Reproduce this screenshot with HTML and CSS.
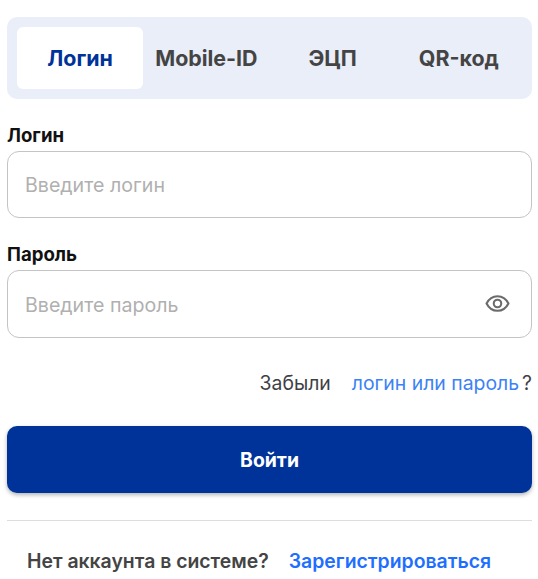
FILE: index.html
```html
<!DOCTYPE html>
<html lang="en">
<head>
  <meta charset="UTF-8" />
  <title>Вход</title>
  <meta name="viewport" content="width=device-width, initial-scale=1" />
  <link rel="stylesheet" href="styles.css">
</head>
<body>

  <div class="container">
    <!-- TABS -->
    <div class="tabs">
      <div class="tab active">Логин</div>
      <div class="tab">Mobile-ID</div>
      <div class="tab">ЭЦП</div>
      <div class="tab">QR-код</div>
    </div>

    <!-- FORM -->
    <div class="field">
      <label class="field-label">Логин</label>
      <div class="input-box">
        <span class="placeholder">Введите логин</span>
      </div>
    </div>

    <div class="field field-password">
      <label class="field-label">Пароль</label>
      <div class="input-box">
        <span class="placeholder">Введите пароль</span>
        <svg class="eye" width="25" height="25" viewBox="0 0 24 24" fill="none" stroke="#6b6b6b" stroke-width="2">
          <path d="M1.5 12C3.8 7.4 7.6 5 12 5S20.2 7.4 22.5 12C20.2 16.6 16.4 19 12 19S3.8 16.6 1.5 12Z" />
          <circle cx="12" cy="12" r="3.6" />
        </svg>
      </div>
    </div>

    <div class="forgot">
      <span>Забыли</span>
      <a href="#">логин или пароль</a><span class="mark">?</span>
    </div>

    <button class="btn-login">Войти</button>

    <div class="divider"></div>

    <div class="register">
      <span>Нет аккаунта в системе?</span>
      <a href="#">Зарегистрироваться</a>
    </div>
  </div>

</body>
</html>
```

FILE: styles.css
```css
* {
  box-sizing: border-box;
}

body, html {
  margin: 0;
  padding: 0;
  font-family: Inter, 'Noto Sans', sans-serif;
  background: #ffffff;
  color: #3f3f46;
}

.container {
  width: 525px;
  margin-left: 7px;
  padding-top: 17px;
}

/* TABS */
.tabs {
  display: grid;
  grid-template-columns: repeat(4, 1fr);
  height: 82px;
  padding: 10px;
  background-color: #e9eef9;
  border-radius: 10px;
}

.tab {
  display: flex;
  align-items: center;
  justify-content: center;
  font-size: 21.4px;
  font-weight: 700;
  color: #444444;
  border-radius: 6px;
}

.tab.active {
  background-color: #ffffff;
  color: #003399;
}

/* FORM */
.field {
  margin-top: 25px;
}

.field-label {
  display: block;
  height: 27px;
  line-height: 23px;
  font-size: 18.6px;
  font-weight: 700;
  color: #111111;
}

.input-box {
  display: flex;
  align-items: center;
  justify-content: space-between;
  height: 67px;
  padding: 0 21px 0 17px;
  border: 1px solid #c4c4c4;
  border-radius: 12px;
}

.field-password .input-box {
  height: 68px;
  padding-top: 1px;
}

.eye {
  margin-top: -2px;
}

.placeholder {
  font-size: 19.6px;
  color: #b0b0b0;
}

.forgot {
  display: flex;
  justify-content: flex-end;
  margin-top: 33px;
  line-height: 24px;
  font-size: 19.4px;
  color: #3f3f46;
}

.forgot a {
  margin-left: 21px;
  color: #3b82f6;
  text-decoration: none;
}

.mark {
  margin-left: 3px;
}

.btn-login {
  display: block;
  width: 100%;
  height: 67px;
  margin-top: 31px;
  border: none;
  border-radius: 10px;
  background-color: #003399;
  color: #ffffff;
  font-family: inherit;
  font-size: 19.4px;
  font-weight: 700;
  box-shadow: 0 2px 4px rgba(0, 0, 0, 0.3);
}

.divider {
  height: 1px;
  margin-top: 27px;
  background-color: #dddddd;
}

.register {
  display: flex;
  margin-top: 28px;
  padding-left: 20px;
  line-height: 24px;
  font-size: 19.4px;
  font-weight: 600;
  color: #444444;
}

.register a {
  margin-left: 20px;
  color: #1f6fff;
  text-decoration: none;
}
```
